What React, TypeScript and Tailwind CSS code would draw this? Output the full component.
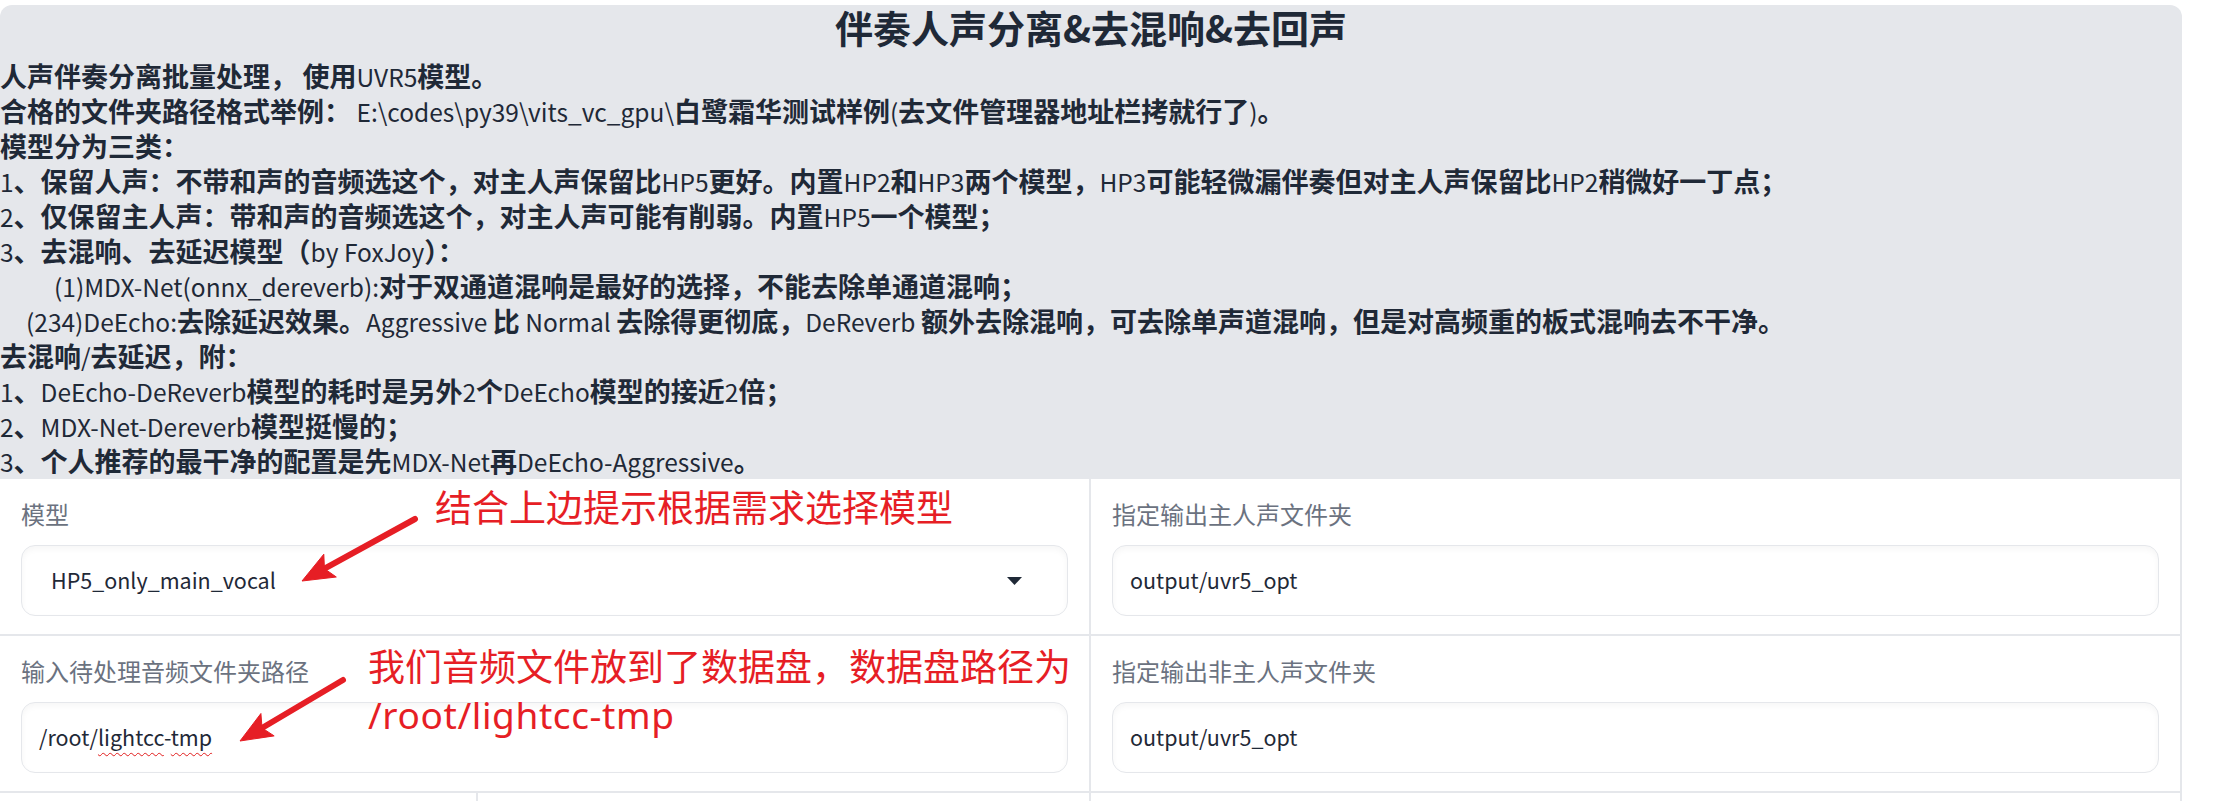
import React from 'react';

const notes: { text: string; indent?: string }[] = [
  { text: '人声伴奏分离批量处理， 使用UVR5模型。' },
  { text: '合格的文件夹路径格式举例： E:\\codes\\py39\\vits_vc_gpu\\白鹭霜华测试样例(去文件管理器地址栏拷就行了)。' },
  { text: '模型分为三类：' },
  { text: '1、保留人声：不带和声的音频选这个，对主人声保留比HP5更好。内置HP2和HP3两个模型，HP3可能轻微漏伴奏但对主人声保留比HP2稍微好一丁点；' },
  { text: '2、仅保留主人声：带和声的音频选这个，对主人声可能有削弱。内置HP5一个模型；' },
  { text: '3、去混响、去延迟模型（by FoxJoy）：' },
  { text: '(1)MDX-Net(onnx_dereverb):对于双通道混响是最好的选择，不能去除单通道混响；', indent: 'pl-[54px]' },
  { text: '(234)DeEcho:去除延迟效果。Aggressive 比 Normal 去除得更彻底，DeReverb 额外去除混响，可去除单声道混响，但是对高频重的板式混响去不干净。', indent: 'pl-[26px]' },
  { text: '去混响/去延迟，附：' },
  { text: '1、DeEcho-DeReverb模型的耗时是另外2个DeEcho模型的接近2倍；' },
  { text: '2、MDX-Net-Dereverb模型挺慢的；' },
  { text: '3、个人推荐的最干净的配置是先MDX-Net再DeEcho-Aggressive。' },
];

// latin runs render smaller and in the regular weight, the rest stays bold
function Mixed({ text, latin = 'font-normal text-[24.5px]' }: { text: string; latin?: string }) {
  const parts = text.split(/([\x00-\x7f]+)/).filter(Boolean);
  return (
    <>
      {parts.map((p, i) =>
        /^[\x00-\x7f]+$/.test(p) ? (
          <span key={i} className={latin}>
            {p}
          </span>
        ) : (
          <span key={i}>{p}</span>
        )
      )}
    </>
  );
}

function Label({ children }: { children: React.ReactNode }) {
  return <div className="h-[32px] text-[24px] leading-[32px] text-[#6b7280]">{children}</div>;
}

function Field({ children, select }: { children: React.ReactNode; select?: boolean }) {
  return (
    <div
      className={`mt-[15px] flex h-[71px] items-center rounded-[14px] border border-[#e5e7eb] bg-white text-[21.5px] text-[#1f2937] shadow-[inset_0_3px_6px_rgba(0,0,0,0.04)] ${
        select ? 'pl-[29px] pr-[45px]' : 'pl-[17px]'
      }`}
    >
      <div className="flex-1">{children}</div>
      {select && (
        <svg width="15" height="8" viewBox="0 0 15 8">
          <polygon points="0,0 15,0 7.5,8" fill="#1f2937" />
        </svg>
      )}
    </div>
  );
}

function Arrow({ x1, y1, x2, y2 }: { x1: number; y1: number; x2: number; y2: number }) {
  const dx = x2 - x1;
  const dy = y2 - y1;
  const len = Math.hypot(dx, dy);
  const ux = dx / len;
  const uy = dy / len;
  const nx = -uy;
  const ny = ux;
  const head = 32;
  const half = 13;
  const bx = x2 - ux * head;
  const by = y2 - uy * head;
  const nbx = x2 - ux * head * 0.8;
  const nby = y2 - uy * head * 0.8;
  const pts = [
    [bx + nx * half, by + ny * half],
    [x2, y2],
    [bx - nx * half, by - ny * half],
    [nbx, nby],
  ]
    .map((p) => p.join(','))
    .join(' ');
  return (
    <g fill="#e61e25" stroke="#e61e25">
      <line x1={x1} y1={y1} x2={nbx + ux * 2} y2={nby + uy * 2} strokeWidth={6} strokeLinecap="round" />
      <polygon points={pts} strokeWidth={1} strokeLinejoin="round" />
    </g>
  );
}

export default function App() {
  return (
    <div className="relative h-[801px] w-[2225px] overflow-hidden bg-white font-['Noto_Sans_CJK_SC',sans-serif]">
      <div className="w-[2182px] pt-[5px]">
        {/* 说明区 */}
        <section className="rounded-t-[12px] bg-[#e5e7eb] pb-[1px] text-[#1f2937]">
          <h1 className="h-[44px] text-center text-[38px] font-bold leading-[44px]">伴奏人声分离&去混响&去回声</h1>
          <div className="mt-[9px] text-[27px] font-bold leading-[35px]">
            {notes.map((n, i) => (
              <p key={i} className={`h-[35px] whitespace-pre ${n.indent ?? ''}`}>
                <Mixed text={n.text} />
              </p>
            ))}
          </div>
        </section>

        {/* 表单区 */}
        <div className="grid grid-cols-[1089px_1093px]">
          <div>
            <div className="border-b-2 border-[#e5e7eb] px-[21px] pb-[18px] pt-[19px]">
              <Label>模型</Label>
              <Field select>HP5_only_main_vocal</Field>
            </div>
            <div className="border-b-2 border-[#e5e7eb] px-[21px] pb-[18px] pt-[19px]">
              <Label>输入待处理音频文件夹路径</Label>
              <Field>
                /root/
                <span className="underline decoration-[#e11d1d] decoration-wavy decoration-1 underline-offset-[6px]">lightcc</span>-
                <span className="underline decoration-[#e11d1d] decoration-wavy decoration-1 underline-offset-[6px]">tmp</span>
              </Field>
            </div>
            <div className="flex h-[60px]">
              <div className="w-[478px] border-r-2 border-[#e5e7eb]" />
            </div>
          </div>
          <div className="border-x-2 border-[#e5e7eb]">
            <div className="border-b-2 border-[#e5e7eb] px-[21px] pb-[18px] pt-[19px]">
              <Label>指定输出主人声文件夹</Label>
              <Field>output/uvr5_opt</Field>
            </div>
            <div className="border-b-2 border-[#e5e7eb] px-[21px] pb-[18px] pt-[19px]">
              <Label>指定输出非主人声文件夹</Label>
              <Field>output/uvr5_opt</Field>
            </div>
            <div className="h-[60px]" />
          </div>
        </div>
      </div>

      {/* 标注 */}
      <div className="pointer-events-none absolute left-[435px] top-[484px] whitespace-nowrap font-['Noto_Sans','Noto_Sans_CJK_SC',sans-serif] text-[37px] leading-[48px] text-[#e61e25]">
        结合上边提示根据需求选择模型
      </div>
      <div className="pointer-events-none absolute left-[368px] top-[643px] whitespace-nowrap font-['Noto_Sans','Noto_Sans_CJK_SC',sans-serif] text-[37px] leading-[48px] text-[#e61e25]">
        <div>我们音频文件放到了数据盘，数据盘路径为</div>
        <div className="tracking-[0.6px]">/root/lightcc-tmp</div>
      </div>
      <svg className="pointer-events-none absolute inset-0" width="2225" height="801">
        <Arrow x1={415} y1={519} x2={302} y2={581} />
        <Arrow x1={343} y1={680} x2={240} y2={741} />
      </svg>
    </div>
  );
}
